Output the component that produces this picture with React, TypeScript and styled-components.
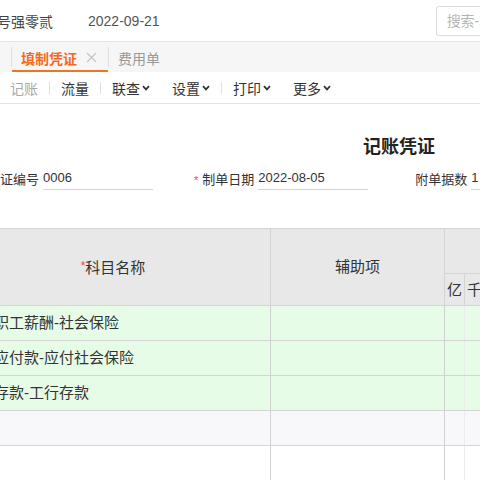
import React from 'react';
import styled, { createGlobalStyle } from 'styled-components';

const GlobalStyle = createGlobalStyle`
  html, body {
    margin: 0;
    padding: 0;
    background: #fff;
    overflow: hidden;
  }
  body {
    font-family: "Liberation Sans", "Noto Sans CJK SC", sans-serif;
    color: #333;
  }
  * { box-sizing: border-box; }
`;

// the page is scrolled a bit to the right, so the whole frame sits 45px left of the window
const Page = styled.div`
  width: 888px;
  margin-left: -45px;
`;

const TopBar = styled.div`
  height: 42px;
  display: flex;
  align-items: center;
  padding-left: 14px;
  border-bottom: 1px solid #e4e4e4;
  font-size: 14px;
`;

const Company = styled.span`
  color: #444;
`;

const DateText = styled.span`
  margin-left: 35px;
  color: #555;
`;

const Search = styled.input`
  margin-left: 276px;
  width: 200px;
  height: 30px;
  border: 1px solid #dcdcdc;
  border-radius: 3px;
  padding: 0 10px;
  font-size: 14px;
  font-family: inherit;
  outline: none;
  &::placeholder { color: #b5b5b5; }
`;

const TabBar = styled.div`
  height: 30px;
  display: flex;
  align-items: stretch;
  padding-left: 56px;
  background: #f6f6f6;
`;

const Sep = styled.span<{ $h?: number }>`
  align-self: center;
  width: 1px;
  height: ${p => p.$h || 20}px;
  background: #dedede;
`;

const Tab = styled.div<{ $active?: boolean }>`
  display: flex;
  align-items: center;
  gap: 9px;
  padding: 3px 11px 0 9px;
  font-size: 14px;
  font-weight: ${p => (p.$active ? 700 : 400)};
  color: ${p => (p.$active ? '#f06b1e' : '#999')};
  border-bottom: 2px solid ${p => (p.$active ? '#f07424' : 'transparent')};
`;

const Toolbar = styled.div`
  height: 32px;
  display: flex;
  align-items: center;
  padding-left: 44px;
  border-bottom: 1px solid #e3e3e3;
  font-size: 14px;
`;

const ToolItem = styled.span<{ $disabled?: boolean }>`
  display: flex;
  align-items: center;
  gap: 2px;
  padding: 0 11px;
  color: ${p => (p.$disabled ? '#aaa' : '#333')};
`;

const Voucher = styled.div`
  padding-top: 30px;
`;

const Title = styled.h2`
  margin: 0;
  text-align: center;
  font-size: 18px;
  line-height: 26px;
  font-weight: 700;
  color: #222;
`;

const FormRow = styled.div`
  display: flex;
  align-items: center;
  gap: 44px;
  margin-top: 6px;
  padding-left: 32px;
  font-size: 13px;
`;

const Field = styled.label<{ $shift?: number }>`
  display: flex;
  align-items: center;
  gap: 4px;
  margin-left: ${p => p.$shift || 0}px;
  color: #333;
`;

const Required = styled.span`
  color: #e8484b;
  font-size: 11px;
  margin-right: 4px;
`;

const FieldInput = styled.input`
  width: 110px;
  height: 24px;
  border: none;
  border-bottom: 1px solid #d4d4d4;
  padding: 0;
  font-size: 13px;
  font-family: inherit;
  color: #333;
  outline: none;
  background: transparent;
`;

const Grid = styled.table`
  margin-top: 38px;
  border-collapse: collapse;
  table-layout: fixed;
  width: 929px;
  font-size: 15px;
  line-height: 20px;
`;

const HeadRow = styled.tr<{ $h: number }>`
  height: ${p => p.$h}px;
`;

const Th = styled.th<{ $light?: boolean }>`
  padding: 0;
  background: #e8e8e8;
  border: 1px solid #d4d4d4;
  border-left-color: ${p => (p.$light ? '#dcdcdc' : '#d4d4d4')};
  font-weight: 400;
  color: #333;
  text-align: center;
  white-space: nowrap;
  overflow: hidden;
`;

const Star = styled.span`
  color: #e8484b;
  font-size: 12px;
  vertical-align: 3px;
`;

const Tr = styled.tr<{ $tone: 'green' | 'grey' | 'white' }>`
  height: 35px;
  background: ${p => (p.$tone === 'green' ? '#e7fce7' : p.$tone === 'grey' ? '#f8f8fa' : '#fff')};
`;

const Td = styled.td<{ $light?: boolean }>`
  padding: 0 8px;
  border-top: 1px solid #d4d4d4;
  border-bottom: 1px solid #d4d4d4;
  border-left: 1px solid ${p => (p.$light ? '#ececec' : '#d0d0d0')};
  color: #333;
  white-space: nowrap;
  overflow: hidden;
`;

const Chevron = () => (
  <svg width="8" height="6" viewBox="0 0 8 6">
    <path d="M1 1.2 L4 4.4 L7 1.2" fill="none" stroke="#333" strokeWidth="1.7" />
  </svg>
);

const Close = () => (
  <svg width="11" height="11" viewBox="0 0 11 11">
    <path d="M1 1 L10 10 M10 1 L1 10" stroke="#c4c4c4" strokeWidth="1.1" />
  </svg>
);

const digits = ['亿', '千', '百', '十', '万', '千', '百', '十', '元', '角', '分'];
const amountCols = [...digits, ...digits];

const rows: { account: string; tone: 'green' | 'grey' | 'white' }[] = [
  { account: '应付职工薪酬-社会保险', tone: 'green' },
  { account: '其他应付款-应付社会保险', tone: 'green' },
  { account: '银行存款-工行存款', tone: 'green' },
  { account: '', tone: 'grey' },
  { account: '', tone: 'white' },
];

const App: React.FC = () => (
  <Page>
    <GlobalStyle />
    <TopBar>
      <Company>宁波号强零贰</Company>
      <DateText>2022-09-21</DateText>
      <Search placeholder="搜索-功能菜单" />
    </TopBar>

    <TabBar>
      <Sep />
      <Tab $active>
        填制凭证
        <Close />
      </Tab>
      <Sep />
      <Tab>费用单</Tab>
    </TabBar>

    <Toolbar>
      <ToolItem $disabled>记账</ToolItem>
      <Sep $h={12} />
      <ToolItem>流量</ToolItem>
      <Sep $h={12} />
      <ToolItem>联查<Chevron /></ToolItem>
      <ToolItem>设置<Chevron /></ToolItem>
      <Sep $h={12} />
      <ToolItem>打印<Chevron /></ToolItem>
      <ToolItem>更多<Chevron /></ToolItem>
    </Toolbar>

    <Voucher>
      <Title>记账凭证</Title>
      <FormRow>
        <Field>
          凭证编号
          <FieldInput defaultValue="0006" />
        </Field>
        <Field $shift={-3}>
          <span><Required>*</Required>制单日期</span>
          <FieldInput defaultValue="2022-08-05" />
        </Field>
        <Field $shift={3}>
          附单据数
          <FieldInput defaultValue="1" />
        </Field>
      </FormRow>

      <Grid>
        <colgroup>
          <col style={{ width: 315 }} />
          <col style={{ width: 174 }} />
          {amountCols.map((_, i) => (
            <col key={i} style={{ width: 20 }} />
          ))}
        </colgroup>
        <thead>
          <HeadRow $h={45}>
            <Th rowSpan={2}><Star>*</Star>科目名称</Th>
            <Th rowSpan={2}>辅助项</Th>
            <Th colSpan={11}>借方金额</Th>
            <Th colSpan={11}>贷方金额</Th>
          </HeadRow>
          <HeadRow $h={32}>
            {amountCols.map((d, i) => (
              <Th key={i} $light={i % 11 !== 0}>{d}</Th>
            ))}
          </HeadRow>
        </thead>
        <tbody>
          {rows.map((r, i) => (
            <Tr key={i} $tone={r.tone}>
              <Td>{r.account}</Td>
              <Td />
              {amountCols.map((_, j) => (
                <Td key={j} $light={j % 11 !== 0} />
              ))}
            </Tr>
          ))}
        </tbody>
      </Grid>
    </Voucher>
  </Page>
);

export default App;
